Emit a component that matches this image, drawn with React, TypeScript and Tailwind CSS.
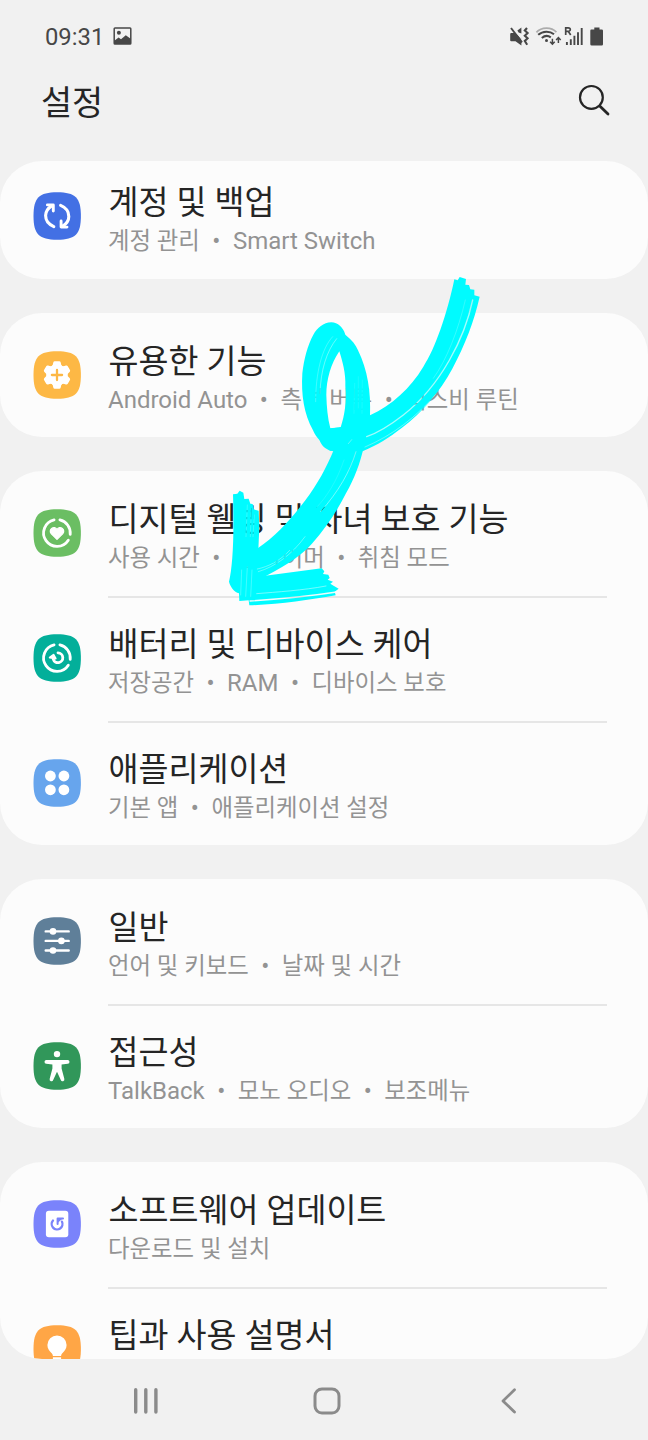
import type { ReactNode } from "react";

function Squircle({ color, children }: { color: string; children: ReactNode }) {
  return (
    <svg className="h-12 w-12 shrink-0" viewBox="0 0 48 48" fill="none">
      <path
        d="M24.2.3C6 .3.5 5.8.5 24S6 47.7 24.2 47.7 47.9 42.2 47.9 24 42.4.3 24.2.3Z"
        fill={color}
      />
      {children}
    </svg>
  );
}

const ring = (
  <g stroke="#fff" strokeWidth="2.8" strokeLinecap="round">
    <path d="M21.1 10.9A13.4 13.4 0 1 0 35.3 31.2" />
    <path d="M26.9 10.9A13.4 13.4 0 0 1 37.2 25.4" />
  </g>
);

const cycleArrow = (
  <>
    <path d="M20.8 34.6C14.6 32 12.6 27.4 12.6 23.6C12.6 19.8 14.6 16.4 19 13.6" strokeWidth="3.1" />
    <path d="M14.4 12.9H20.3V19" strokeWidth="2.9" />
  </>
);

const icons = {
  account: (
    <Squircle color="#4370e4">
      <g stroke="#fff" strokeLinecap="round" strokeLinejoin="round">
        {cycleArrow}
        <g transform="rotate(180 24.2 24)">{cycleArrow}</g>
      </g>
    </Squircle>
  ),
  features: (
    <Squircle color="#fdb845">
      <g fill="#fff">
        <circle cx="24" cy="24" r="10.6" />
        {[0, 60, 120, 180, 240, 300].map((a) => (
          <path
            key={a}
            d="M18.6 15.4Q20 14.4 20.3 11.6Q20.5 10.3 21.8 10.3H26.2Q27.5 10.3 27.7 11.6Q28 14.4 29.4 15.4Z"
            transform={`rotate(${a} 24 24)`}
          />
        ))}
      </g>
      <path d="M24 18.9V29.1M18.9 24H29.1" stroke="#fdb845" strokeWidth="2.3" strokeLinecap="round" />
    </Squircle>
  ),
  wellbeing: (
    <Squircle color="#6bbe63">
      {ring}
      <path
        d="M24 30.4L18.4 24.9C16.8 23.2 17 20.7 18.7 19.4C20.4 18.1 22.8 18.5 24 20.5C25.2 18.5 27.6 18.1 29.3 19.4C31 20.7 31.2 23.2 29.6 24.9Z"
        fill="#fff"
        stroke="#fff"
        strokeWidth="1.3"
        strokeLinejoin="round"
      />
    </Squircle>
  ),
  battery: (
    <Squircle color="#03af9a">
      {ring}
      <path d="M25 18.9A4.9 4.9 0 1 1 20.2 25.2" stroke="#fff" strokeWidth="2.8" strokeLinecap="round" />
      <path d="M16.8 23.6L20.6 20.9L22.6 24.6Z" fill="#fff" stroke="#fff" strokeWidth="2" strokeLinejoin="round" />
    </Squircle>
  ),
  apps: (
    <Squircle color="#67a5ed">
      <g fill="#fff">
        <circle cx="17.4" cy="17" r="5.4" />
        <circle cx="30.9" cy="17" r="5.4" />
        <circle cx="17.4" cy="30.8" r="5.4" />
        <circle cx="30.9" cy="30.8" r="5.4" />
      </g>
    </Squircle>
  ),
  general: (
    <Squircle color="#5f7f99">
      <path d="M12.7 14.4H35.7M12.7 23.9H35.7M12.7 33.5H35.7" stroke="#fff" strokeWidth="2.4" strokeLinecap="round" />
      <g fill="#fff">
        <circle cx="20" cy="14.4" r="3.3" />
        <circle cx="28.4" cy="23.9" r="3.3" />
        <circle cx="20" cy="33.5" r="3.3" />
      </g>
    </Squircle>
  ),
  accessibility: (
    <Squircle color="#31975a">
      <circle cx="24" cy="12.1" r="3.2" fill="#fff" />
      <path
        d="M13.4 18.1H34.6A1.8 1.8 0 0 1 34.8 21.7L28.6 22.4V26.6L31.3 36.8A1.8 1.8 0 0 1 27.8 38L24 29.8L20.2 38A1.8 1.8 0 0 1 16.7 36.8L19.4 26.6V22.4L13.2 21.7A1.8 1.8 0 0 1 13.4 18.1Z"
        fill="#fff"
      />
    </Squircle>
  ),
  update: (
    <Squircle color="#7a83fb">
      <rect x="12.9" y="10.8" width="22.4" height="26.4" rx="3" fill="#fff" />
      <path d="M20 20.5A5.4 5.4 0 1 0 28.9 21.6" stroke="#7a83fb" strokeWidth="2.3" strokeLinecap="round" />
      <path d="M24.6 24V18.4H30" stroke="#7a83fb" strokeWidth="2" strokeLinecap="round" strokeLinejoin="round" />
      <path d="M24.6 18.4H29.6L24.6 23Z" fill="#7a83fb" />
    </Squircle>
  ),
  tips: (
    <Squircle color="#ffa646">
      <path
        d="M24 10.5A9.6 9.6 0 0 1 33.6 20.1C33.6 23.8 31.6 26.1 29.8 27.8C28.6 29 28.3 29.8 28.1 31H19.9C19.7 29.8 19.4 29 18.2 27.8C16.4 26.1 14.4 23.8 14.4 20.1A9.6 9.6 0 0 1 24 10.5Z"
        fill="#fff"
      />
      <path d="M19.9 32.3H28.1V37H19.9Z" fill="#fff" />
    </Squircle>
  ),
};

type Item = { icon: ReactNode; title: string; sub: string[] };

const first: Item = { icon: icons.account, title: "계정 및 백업", sub: ["계정 관리", "Smart Switch"] };
const groups: Item[][] = [
  [{ icon: icons.features, title: "유용한 기능", sub: ["Android Auto", "측면 버튼", "빅스비 루틴"] }],
  [
    { icon: icons.wellbeing, title: "디지털 웰빙 및 자녀 보호 기능", sub: ["사용 시간", "앱 타이머", "취침 모드"] },
    { icon: icons.battery, title: "배터리 및 디바이스 케어", sub: ["저장공간", "RAM", "디바이스 보호"] },
    { icon: icons.apps, title: "애플리케이션", sub: ["기본 앱", "애플리케이션 설정"] },
  ],
  [
    { icon: icons.general, title: "일반", sub: ["언어 및 키보드", "날짜 및 시간"] },
    { icon: icons.accessibility, title: "접근성", sub: ["TalkBack", "모노 오디오", "보조메뉴"] },
  ],
];
const last: Item[] = [
  { icon: icons.update, title: "소프트웨어 업데이트", sub: ["다운로드 및 설치"] },
  { icon: icons.tips, title: "팁과 사용 설명서", sub: [] },
];

function isLatin(text: string) {
  return /^[A-Za-z ]+$/.test(text);
}

function Row({ item, divided }: { item: Item; divided: boolean }) {
  return (
    <div className="flex h-[124.6px] shrink-0 pl-[33px] pr-[41px]">
      <div className="pt-[38px]">{item.icon}</div>
      <div className={`ml-[27px] flex-1 ${divided ? "border-t-2 border-[#e6e6e6] pt-[26px]" : "pt-7"}`}>
        <div className="whitespace-nowrap pl-[.5px] text-[32.6px] leading-[42px] text-[#252525]">{item.title}</div>
        <div className="flex whitespace-nowrap pt-px text-[23.4px] leading-[32px] text-[#939393]">
          {item.sub.map((s, i) => (
            <span key={s} className="flex">
              {i > 0 && <span className="w-[33px] text-center text-[24px]">•</span>}
              <span className={isLatin(s) ? "text-[24px]" : ""}>{s}</span>
            </span>
          ))}
        </div>
      </div>
    </div>
  );
}

function Card({ items }: { items: Item[] }) {
  return (
    <section className="shrink-0 overflow-hidden rounded-[42px] bg-[#fcfcfc]">
      {items.map((item, i) => (
        <Row key={item.title} item={item} divided={i > 0} />
      ))}
    </section>
  );
}

function StatusBar() {
  return (
    <div className="flex h-[74px] items-center pl-[45px] pr-[44px] text-[#474747]">
      <span className="w-[59px] pt-[2px] text-[23.8px] leading-none">09:31</span>
      <svg className="mb-[3px] ml-[9px] h-[18px] w-[19px]" viewBox="0 0 19 18">
        <rect x="1.2" y="1" width="16.6" height="16" rx=".8" fill="none" stroke="currentColor" strokeWidth="1.5" />
        <circle cx="5.9" cy="5.8" r="2" fill="currentColor" />
        <path d="M1 14L5.6 10.6L8 12.2L12.8 8.2L18 12V17H1Z" fill="currentColor" />
      </svg>
      <svg className="ml-auto h-[22px] w-[96px]" viewBox="0 0 96 22" fill="none" stroke="currentColor">
        <path d="M3.2 7H7L13.4 12V19.4L7.5 15.3H3.2Q2.2 15.3 2.2 14.3V8Q2.2 7 3.2 7Z" fill="currentColor" stroke="none" />
        <path d="M4.6 1.4L15.4 15.5" stroke="#f1f1f1" strokeWidth="1.2" />
        <path d="M3 2L14 16.4" strokeWidth="1.9" />
        <path d="M9.4 4.4L13.4 1.6V7.4L10.6 6.6Z" fill="currentColor" stroke="none" />
        <path d="M19 2L16.8 4.5L19.6 7L16.8 9.7L19.6 12.3L16.8 15L19.2 18.7" strokeWidth="2.1" />
        <path d="M28.4 6.4C33.5 .8 43.3 .8 48.4 6.2" strokeWidth="1.7" opacity=".4" />
        <path d="M30.2 8.8C34.8 4.7 41.8 4.7 46 8.3" strokeWidth="2" />
        <path d="M33.8 12C36.7 9.5 40.2 9.5 42.8 11.4" strokeWidth="2" />
        <circle cx="38.5" cy="14.6" r="1.5" fill="currentColor" stroke="none" />
        <path d="M44.4 12.7V18M42.1 15.8L44.4 18.2L46.7 15.8M50.4 17V11.6M48.1 14L50.4 11.6L52.7 14" strokeWidth="1.5" />
        <path d="M57.7 9V1.8H60.2C63 1.8 63 5.3 60.2 5.3H57.7M60.2 5.3L62.7 9" strokeWidth="1.7" />
        <path d="M58.9 19V16M62.8 19V13.2M66.4 19V9.8M70 19V6.2M73.7 19V2" strokeWidth="1.9" />
        <path d="M83.2 3.5H86.3V1.4H91.5V3.5H93.8Q95 3.5 95 4.7V18.2Q95 19.5 93.8 19.5H83.7Q82.3 19.5 82.3 18.2V4.7Q82.3 3.5 83.2 3.5Z" fill="currentColor" stroke="none" />
      </svg>
    </div>
  );
}

function BrushArrow() {
  return (
    <svg className="pointer-events-none absolute left-[220px] top-[270px] h-[350px] w-[270px]" viewBox="0 0 810 1050">
      <mask id="streaks" maskUnits="userSpaceOnUse" x="0" y="0" width="810" height="1050">
        <rect width="810" height="1050" fill="#fff" />
        <g fill="none" stroke="#000" strokeLinecap="round">
          <path d="M758 90C735 200 665 345 550 435C510 466 475 488 440 500" strokeWidth="4" opacity=".65" />
          <path d="M736 90C715 180 680 270 640 325" strokeWidth="2.5" opacity=".25" />
          <path d="M650 370C590 440 520 495 435 531" strokeWidth="2" opacity=".6" />
          <path d="M338 200C305 235 287 310 287 395" strokeWidth="2.5" opacity=".3" />
          <path d="M350 206C320 243 302 300 300 370" strokeWidth="3" opacity=".4" />
          <path d="M415 320V415M427 330L426 430M404 340L402 430" strokeWidth="2" opacity=".15" />
          <path d="M408 545C390 605 355 665 302 725" strokeWidth="3" opacity=".45" />
          <path d="M372 570C350 635 320 680 290 712" strokeWidth="2" opacity=".2" />
          <path d="M255 800C215 855 165 890 115 905M210 840C180 873 145 890 112 897" strokeWidth="2.5" opacity=".45" />
          <path d="M82 705L78 800M94 715L91 800M103 735L99 800" strokeWidth="2.5" opacity=".25" />
          <path d="M65 900L62 975M82 890L77 980M96 900L92 980" strokeWidth="2" opacity=".4" />
          <path d="M110 971C170 966 250 961 318 948" strokeWidth="2.5" opacity=".55" />
          <path d="M90 993C180 987 260 980 350 966" strokeWidth="4" opacity=".95" />
          <path d="M385 521L395 509" strokeWidth="3" opacity=".4" />
        </g>
      </mask>
      <g fill="#00fbff" mask="url(#streaks)">
        <path d="M703 28L713 31L719 21L738 27L736 44L747 45L751 58L763 59L763 76L779 80C762 155 735 224 697 296C660 365 607 427 545 474C506 504 474 524 428 544L410 537C380 544 350 545 330 542C315 536 303 526 298 508L327 476C349 473 366 473 380 466L450 436C516 405 571 355 610 290C645 238 682 130 703 28Z" />
        <path fillRule="evenodd" d="M334 157C354 158 369 171 376 194C396 210 408 225 414 241C443 300 453 366 450 438L380 520L331 542C309 520 288 505 279 481C252 433 243 374 247 310C252 265 263 226 280 194C292 173 310 158 334 157ZM358 244C333 280 319 329 319 375C320 410 323 445 331 475L362 472C374 435 380 397 376 349C378 310 367 273 358 244Z" />
        <path d="M342 538L433 525C419 584 404 624 378 670C350 725 318 773 277 820C238 865 183 894 116 930L90 925L110 837C175 793 212 747 256 691C293 642 319 594 342 538Z" />
        <path d="M39 673L52 671L59 662L70 668L73 687L86 686L91 701L98 702L101 718L116 722L118 770L115 840L130 918L305 895L313 904L309 912L325 914L329 924L323 929L339 935L331 941L342 948L356 956L344 965L347 976C265 991 176 1003 88 1006L86 991L58 993L57 970C42 965 31 951 27 935C38 890 43 800 39 673Z" />
      </g>
    </svg>
  );
}

export default function App() {
  return (
    <div
      className="relative flex h-[1440px] w-[648px] flex-col overflow-hidden bg-[#f1f1f1] font-[Roboto,'Noto_Sans_CJK_KR',sans-serif]"
      lang="ko"
    >
      <StatusBar />
      <header className="flex h-[87px] items-start justify-between pl-[41px] pr-[37px]">
        <h1 className="pt-[6px] text-[33.8px] leading-[48px] text-[#252525]">설정</h1>
        <svg className="mt-[9px] h-[34px] w-[34px]" viewBox="0 0 34 34" fill="none" stroke="#252525" strokeLinecap="round">
          <circle cx="14.4" cy="14.4" r="11.4" strokeWidth="2.2" />
          <path d="M23 23.2L31 31" strokeWidth="2.8" />
        </svg>
      </header>
      <main className="flex h-[1198px] flex-col gap-[33.9px] overflow-hidden">
        <section className="flex h-[118px] shrink-0 flex-col justify-end overflow-hidden rounded-[42px] bg-[#fcfcfc]">
          <Row item={first} divided={false} />
        </section>
        {groups.map((items) => (
          <Card key={items[0].title} items={items} />
        ))}
        <section className="flex min-h-0 flex-1 flex-col overflow-hidden rounded-[42px] bg-[#fcfcfc]">
          {last.map((item, i) => (
            <Row key={item.title} item={item} divided={i > 0} />
          ))}
        </section>
      </main>
      <nav className="flex h-[81px] items-start pl-[133px] pt-[27px]">
        <svg className="h-[30px] w-[26px]" viewBox="0 0 26 30" stroke="#8b8b8b" strokeWidth="3.4" strokeLinecap="round">
          <path d="M2.7 3.7V26M12.8 3.7V26M22.9 3.7V26" />
        </svg>
        <svg className="ml-[154px] h-[30px] w-[28px]" viewBox="0 0 28 30" fill="none" stroke="#8b8b8b" strokeWidth="3">
          <rect x="2" y="3" width="24" height="24" rx="7" />
        </svg>
        <svg className="ml-[159px] h-[30px] w-[18px]" viewBox="0 0 18 30" fill="none" stroke="#8b8b8b" strokeWidth="2.8" strokeLinecap="round" strokeLinejoin="round">
          <path d="M14.5 3.8L3 14.9L14.5 26" />
        </svg>
      </nav>
      <BrushArrow />
    </div>
  );
}
